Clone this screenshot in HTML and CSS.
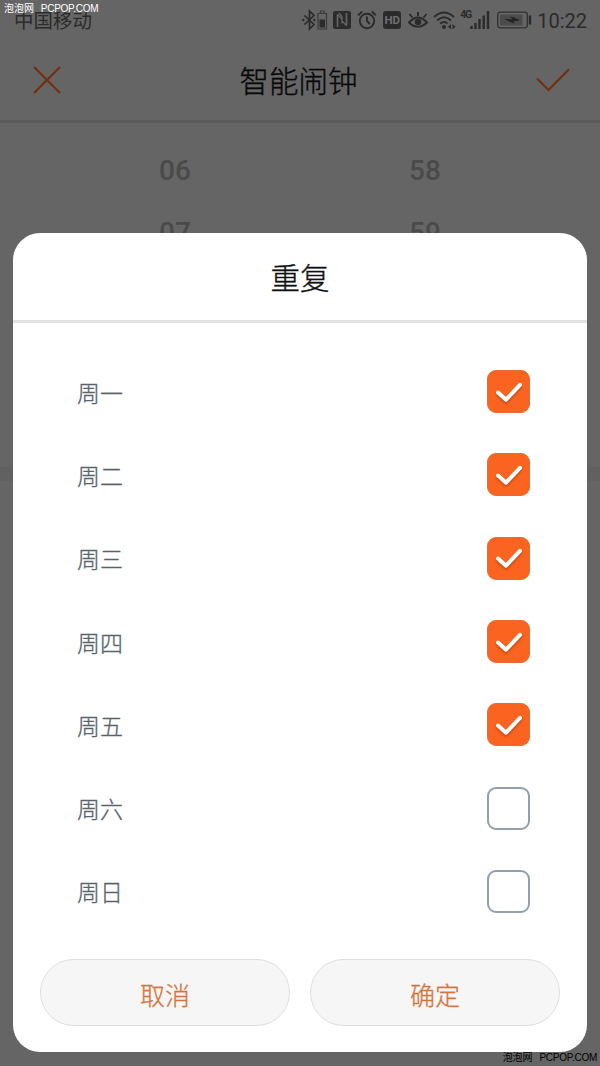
FILE: index.html
```
<!DOCTYPE html>
<html lang="zh-CN">
<head>
    <meta charset="UTF-8">
    <meta name="viewport" content="width=device-width, initial-scale=1.0">
    <title>智能闹钟</title>
    <link rel="stylesheet" href="styles.css">
</head>
<body>
    <div class="screen">
        <!-- Status bar -->
        <div class="status-bar">
            <span class="carrier">中国移动</span>
            <div class="status-icons">
                <svg class="icon-bluetooth" width="26" height="22" viewBox="0 0 26 22">
                    <path d="M2.500 6.500L12 15.500L7.500 20V2L12 6.500L2.500 15.500" fill="none" stroke="#2b2b2b" stroke-width="1.700"/>
                    <circle cx="1.300" cy="11" r="1.200" fill="#2b2b2b"/>
                    <circle cx="12.300" cy="11" r="1.200" fill="#2b2b2b"/>
                    <path d="M16 4.500H24.500V20H16ZM18.500 4V2H22V4" fill="none" stroke="#3b3b3b" stroke-width="1.200"/>
                    <path d="M17.500 10.500H23V18.500H17.500Z" fill="#2b2b2b"/>
                </svg>
                <svg class="icon-nfc" width="18" height="22" viewBox="0 0 18 22">
                    <rect y="2" width="18" height="18" rx="2.500" fill="#2b2b2b"/>
                    <path d="M4.500 18V5.500M13.500 16.500V4" fill="none" stroke="#656565" stroke-width="1.700"/>
                    <path d="M4.500 5.500L9 10V14.500M13.500 16.500L9 12V7.500L6 4" fill="none" stroke="#656565" stroke-width="1.300"/>
                </svg>
                <svg class="icon-alarm" width="20" height="22" viewBox="0 0 20 22">
                    <circle cx="10" cy="12" r="7.200" fill="none" stroke="#2b2b2b" stroke-width="1.900"/>
                    <path d="M10 7.500V12L12.700 15M1.200 6.200L5.200 2.500M18.800 6.200L14.800 2.500" fill="none" stroke="#2b2b2b" stroke-width="1.900"/>
                </svg>
                <span class="hd">HD</span>
                <svg class="icon-eye" width="20" height="22" viewBox="0 0 20 22">
                    <path d="M1 13.500Q10 3.500 19 13.500Q10 22 1 13.500Z" fill="none" stroke="#2b2b2b" stroke-width="1.900"/>
                    <circle cx="10" cy="13" r="3.300" fill="#2b2b2b"/>
                    <path d="M10 7V3M4.500 8.500L1.500 5M15.500 8.500L18.500 5" stroke="#2b2b2b" stroke-width="1.900"/>
                </svg>
                <svg class="icon-wifi" width="23" height="22" viewBox="0 0 23 22">
                    <path d="M1 8Q11 -1 21 8M4 11.500Q11 5 18 11.500M7.200 14.800Q11 11.500 14.500 14.500" fill="none" stroke="#2b2b2b" stroke-width="2"/>
                    <circle cx="11" cy="18" r="2" fill="#2b2b2b"/>
                    <path d="M18 15V20.500L15 17.700ZM19.500 15V20.500L22.500 17.700Z" fill="#2b2b2b"/>
                </svg>
                <span class="net">4G</span>
                <svg class="icon-signal" width="20" height="22" viewBox="0 0 20 22">
                    <path d="M1.500 17V20M5.500 14V20M9.500 10V20M13.700 6.500V20M18 2V20" stroke="#2b2b2b" stroke-width="2.400"/>
                </svg>
                <svg class="icon-battery" width="35" height="22" viewBox="0 0 35 22">
                    <rect x=".7" y="3.200" width="29.600" height="15.600" rx="2.500" fill="none" stroke="#303030" stroke-width="1.300"/>
                    <rect x="3" y="5.500" width="22.500" height="11" fill="#4b4b4b"/>
                    <path d="M8.500 10.300L15.500 11L14.500 8L22 11.300L16 11.500L17 14Z" fill="#222" stroke="#222" stroke-width=".8"/>
                    <path d="M33 6.500V15.500" stroke="#2b2b2b" stroke-width="2.400"/>
                </svg>
            </div>
            <span class="clock">10:22</span>
        </div>

        <!-- Page header -->
        <div class="header">
            <svg width="28" height="28" viewBox="0 0 28 28">
                <path d="M1 1L27 27M27 1L1 27" stroke="#71300f" stroke-width="2.200"/>
            </svg>
            <h1>智能闹钟</h1>
            <svg width="34" height="24" viewBox="0 0 34 24">
                <path d="M1 10.500L12.500 22L33 1.200" fill="none" stroke="#71300f" stroke-width="2.200"/>
            </svg>
        </div>

        <!-- Time picker -->
        <div class="picker">
            <div class="picker-col"><span>06</span><span>07</span></div>
            <div class="picker-col"><span>58</span><span>59</span></div>
        </div>
        <div class="section-gap"></div>
    </div>

    <!-- Repeat dialog -->
    <div class="dialog">
        <h2>重复</h2>
        <ul class="days">
            <li><span>周一</span><div class="checkbox checked"><svg width="28" height="22" viewBox="0 0 28 22"><path d="M3 11.500L11 18.700L25 3.800"/></svg></div></li>
            <li><span>周二</span><div class="checkbox checked"><svg width="28" height="22" viewBox="0 0 28 22"><path d="M3 11.500L11 18.700L25 3.800"/></svg></div></li>
            <li><span>周三</span><div class="checkbox checked"><svg width="28" height="22" viewBox="0 0 28 22"><path d="M3 11.500L11 18.700L25 3.800"/></svg></div></li>
            <li><span>周四</span><div class="checkbox checked"><svg width="28" height="22" viewBox="0 0 28 22"><path d="M3 11.500L11 18.700L25 3.800"/></svg></div></li>
            <li><span>周五</span><div class="checkbox checked"><svg width="28" height="22" viewBox="0 0 28 22"><path d="M3 11.500L11 18.700L25 3.800"/></svg></div></li>
            <li><span>周六</span><div class="checkbox"></div></li>
            <li><span>周日</span><div class="checkbox"></div></li>
        </ul>
        <div class="actions">
            <button>取消</button>
            <button>确定</button>
        </div>
    </div>

    <div class="watermark watermark-top">泡泡网 <span>PCPOP.COM</span></div>
    <div class="watermark watermark-bottom">泡泡网 <span>PCPOP.COM</span></div>
</body>
</html>
```
FILE: styles.css
```
* {
    box-sizing: border-box;
}

body {
    margin: 0;
    position: relative;
    width: 600px;
    height: 1066px;
    overflow: hidden;
    background-color: #656565;
    font-family: Roboto, "Noto Sans CJK SC", sans-serif;
}

/* Status bar */
.status-bar {
    display: flex;
    align-items: center;
    height: 40px;
    padding: 0 13px 0 14px;
    color: #2b2b2b;
}

.carrier {
    font-size: 19.5px;
    line-height: 38px;
    padding-top: 4px;
}

.status-icons {
    display: flex;
    align-items: center;
    margin-left: auto;
}

.icon-nfc {
    margin-left: 5px;
}

.icon-alarm {
    margin-left: 6px;
}

.hd {
    width: 18px;
    height: 18px;
    margin-left: 6px;
    border-radius: 3px;
    background-color: #2b2b2b;
    color: #707070;
    font-size: 11.5px;
    font-weight: 700;
    line-height: 19px;
    text-align: center;
}

.icon-eye {
    margin-left: 7px;
}

.icon-wifi {
    margin-left: 5px;
}

.net {
    width: 10px;
    height: 22px;
    margin-left: 4px;
    font-size: 10.5px;
    font-weight: 700;
    line-height: 11px;
    letter-spacing: -1.2px;
}

.icon-battery {
    margin-left: 7px;
}

.clock {
    margin-left: 5px;
    padding-top: 2px;
    font-size: 20px;
}

/* Header */
.header {
    display: flex;
    align-items: center;
    justify-content: space-between;
    height: 83px;
    padding: 0 30px 0 33px;
    border-bottom: 3px solid #595959;
}

h1,
h2 {
    margin: 0;
    font-weight: 300;
    -webkit-text-stroke: 0.35px currentColor;
}

h1 {
    padding-top: 4px;
    color: #080808;
    font-size: 29.5px;
    line-height: 40px;
}

/* Time picker */
.picker {
    display: flex;
    justify-content: center;
    height: 344px;
    padding-top: 17px;
}

.picker-col {
    display: flex;
    flex-direction: column;
    width: 250px;
    color: #4a4a4a;
    font-size: 28px;
    font-weight: 500;
    line-height: 62px;
    text-align: center;
}

.section-gap {
    height: 14px;
    background-color: #616161;
}

/* Dialog */
.dialog {
    position: absolute;
    top: 233px;
    left: 13px;
    width: 574px;
    height: 819px;
    border-radius: 27px;
    background-color: #fff;
}

h2 {
    height: 90px;
    border-bottom: 3px solid #e2e2e2;
    color: #111;
    font-size: 29.5px;
    line-height: 92px;
    text-align: center;
}

.days {
    margin: 0;
    padding: 27px 57px 0 64px;
    list-style: none;
}

.days li {
    display: flex;
    align-items: center;
    justify-content: space-between;
    height: 83.3px;
    color: #56646c;
    font-size: 23px;
    font-weight: 300;
    -webkit-text-stroke: 0.3px currentColor;
}

.checkbox {
    display: flex;
    align-items: center;
    justify-content: center;
    width: 43px;
    height: 43px;
    border: 2px solid #92a0a9;
    border-radius: 9px;
}

.checkbox.checked {
    border: 1px solid #e56d35;
    background-color: #fa6420;
}

.checkbox svg {
    flex-shrink: 0;
    overflow: visible;
}

.checkbox path {
    fill: none;
    stroke: #fff;
    stroke-width: 4;
    stroke-linecap: round;
    stroke-linejoin: round;
    filter: drop-shadow(0 2px 1px rgba(120, 40, 0, 0.4));
}

.actions {
    display: flex;
    gap: 20px;
    padding: 26px 27px 0;
}

button {
    flex: 1;
    height: 67px;
    padding: 2px 0 0;
    border: 1px solid #dedede;
    border-radius: 34px;
    background-color: #f6f6f6;
    color: #d4743d;
    font-family: inherit;
    font-size: 25px;
    font-weight: 300;
    -webkit-text-stroke: 0.3px currentColor;
}

.watermark {
    position: absolute;
    font-family: "Liberation Sans", "Noto Sans CJK SC", sans-serif;
    font-size: 10px;
    line-height: 12px;
    white-space: nowrap;
}

.watermark span {
    margin-left: 4px;
    letter-spacing: -0.25px;
}

.watermark-top {
    top: 3px;
    left: 4px;
    color: #fff;
}

.watermark-bottom {
    right: 3px;
    bottom: 2px;
    color: #000;
}
```
